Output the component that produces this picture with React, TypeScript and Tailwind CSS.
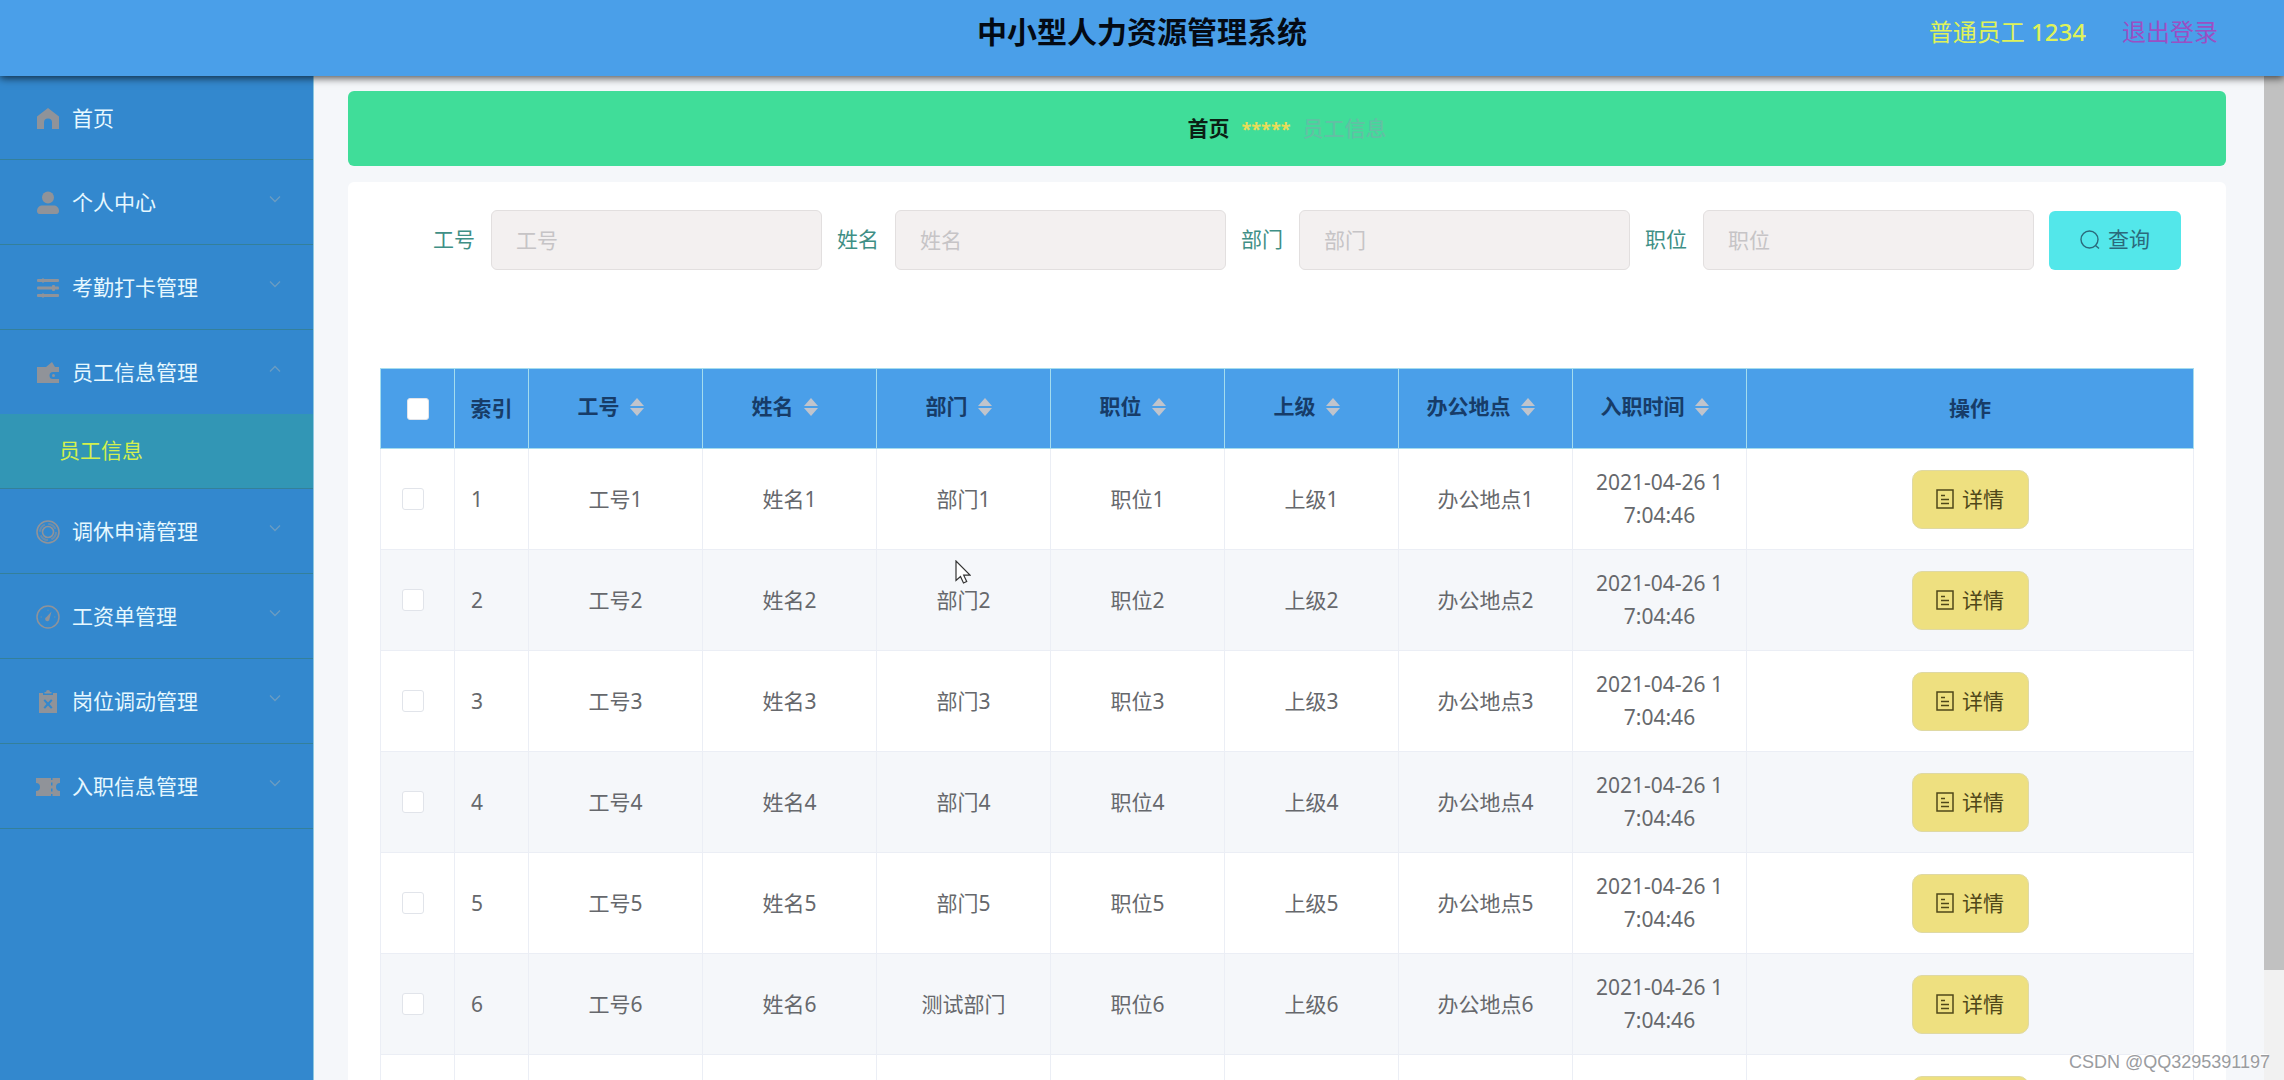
import { useState } from "react"
import type { ReactNode } from "react"

interface MenuItem {
  label: string
  icon: ReactNode
  children?: string[]
}

interface Employee {
  id: number
  jobNo: string
  name: string
  dept: string
  position: string
  leader: string
  office: string
  entryTime: string
}

const HomeIcon = () => (
  <svg viewBox="0 0 24 24" className="h-6 w-6" fill="currentColor" aria-hidden="true">
    <path d="M12 1 23 9.5V22h-7v-6.5a4 4 0 0 0-8 0V22H1V9.5z" />
  </svg>
)

const UserIcon = () => (
  <svg viewBox="0 0 24 24" className="h-6 w-6" fill="currentColor" aria-hidden="true">
    <circle cx="12" cy="6.5" r="6" />
    <path d="M1 20c0-3.500 2.500-5.500 5.500-5.500h11c3 0 5.500 2 5.500 5.500 0 1.500-.8 3-2.500 3h-17C1.800 23 1 21.500 1 20z" />
  </svg>
)

const OperationIcon = () => (
  <svg viewBox="0 0 24 24" className="h-6 w-6" fill="currentColor" aria-hidden="true">
    <rect x="1" y="3" width="22" height="3" rx="1" />
    <rect x="1" y="10.500" width="22" height="3" rx="1" />
    <rect x="1" y="18" width="22" height="3" rx="1" />
    <rect x="6" y="2.500" width="2" height="4" />
    <rect x="16" y="9" width="3" height="6" rx="1" />
    <rect x="6" y="17.500" width="2" height="4" />
  </svg>
)

const WalletIcon = () => (
  <svg viewBox="0 0 24 24" className="h-6 w-6" fill="currentColor" aria-hidden="true">
    <path d="M1 6h9l6-5 3 5h4v5h-6a3.500 3.500 0 0 0 0 7h6v4H1z" />
    <circle cx="17.500" cy="14.500" r="1.500" />
  </svg>
)

const HelpIcon = () => (
  <svg viewBox="0 0 24 24" className="h-6 w-6" fill="none" stroke="currentColor" aria-hidden="true">
    <circle cx="12" cy="12" r="11" strokeWidth="1.600" />
    <circle cx="12" cy="12" r="8" strokeWidth="2" strokeDasharray="9 3.566" strokeOpacity=".6" />
    <circle cx="12" cy="12" r="5.500" strokeWidth="1.600" />
  </svg>
)

const OdometerIcon = () => (
  <svg viewBox="0 0 24 24" className="h-6 w-6" fill="none" stroke="currentColor" aria-hidden="true">
    <circle cx="12" cy="12" r="11" strokeWidth="1.500" />
    <path d="M15.500 6.500 13.500 14a2.200 2.200 0 1 1-3-2z" fill="currentColor" stroke="none" />
    <path d="M4.500 12h1.500M18 12h1.500M12 4.500V6" strokeOpacity=".6" />
  </svg>
)

const ReleaseIcon = () => (
  <svg viewBox="0 0 24 24" className="h-6 w-6" fill="currentColor" fillRule="evenodd" aria-hidden="true">
    <path d="M3 3h4v2h10V3h4v20H3zM7.500 10.500 10.500 14l-3 3.500 1.500 1.200 3-3.200 3 3.200 1.500-1.200-3-3.500 3-3.500L15 9.300l-3 3.200-3-3.200z" />
    <path d="M8.500 3.500V2H10a2 2 0 0 1 4 0h1.500v1.500z" />
  </svg>
)

const TicketIcon = () => (
  <svg viewBox="0 0 24 24" className="h-6 w-6" fill="currentColor" aria-hidden="true">
    <path d="M0 3h15v2h1.500V3H24v5a4 4 0 0 0 0 8v5h-7.500v-2H15v2H0v-5a4 4 0 0 0 0-8zm15 4.500v3h1.500v-3zm0 6v3h1.500v-3z" fillRule="evenodd" />
  </svg>
)

const ChevronIcon = ({ up }: { up?: boolean }) => (
  <svg viewBox="0 0 12 8" className="h-2 w-3" fill="none" stroke="currentColor" strokeWidth="1.300" aria-hidden="true">
    <path d={up ? "M1 6.500 6 1.500l5 5" : "M1 1.500l5 5 5-5"} />
  </svg>
)

const SearchIcon = () => (
  <svg viewBox="0 0 20 20" className="h-5 w-5" fill="none" stroke="currentColor" strokeWidth="1.400" aria-hidden="true">
    <circle cx="9.500" cy="9.500" r="8.500" />
    <path d="m15.500 15.500 3.500 3" />
  </svg>
)

const DocumentIcon = () => (
  <svg viewBox="0 0 18 20" className="h-5 w-[18px]" fill="none" stroke="currentColor" strokeWidth="1.500" aria-hidden="true">
    <path d="M1 1h16v18H1zM5 6.500h4M5 10.500h8M5 14.500h8" />
  </svg>
)

const SortCaret = () => (
  <svg viewBox="0 0 14 18" className="h-[18px] w-[14px]" fill="#c0c4cc" aria-hidden="true">
    <path d="M7 0l7 8H0zM7 18l7-8H0z" />
  </svg>
)

const menu: MenuItem[] = [
  { label: "首页", icon: <HomeIcon /> },
  { label: "个人中心", icon: <UserIcon />, children: [] },
  { label: "考勤打卡管理", icon: <OperationIcon />, children: [] },
  { label: "员工信息管理", icon: <WalletIcon />, children: ["员工信息"] },
  { label: "调休申请管理", icon: <HelpIcon />, children: [] },
  { label: "工资单管理", icon: <OdometerIcon />, children: [] },
  { label: "岗位调动管理", icon: <ReleaseIcon />, children: [] },
  { label: "入职信息管理", icon: <TicketIcon />, children: [] },
]

const searchFields = [
  { key: "jobNo", label: "工号" },
  { key: "name", label: "姓名" },
  { key: "dept", label: "部门" },
  { key: "position", label: "职位" },
]

const sortColumns = ["工号", "姓名", "部门", "职位", "上级", "办公地点", "入职时间"]

const employees: Employee[] = [1, 2, 3, 4, 5, 6, 7].map((n) => ({
  id: n,
  jobNo: `工号${n}`,
  name: `姓名${n}`,
  dept: n === 6 ? "测试部门" : `部门${n}`,
  position: `职位${n}`,
  leader: `上级${n}`,
  office: `办公地点${n}`,
  entryTime: "2021-04-26 17:04:46",
}))

function Header() {
  return (
    <header className="relative z-10 grid h-[76px] shrink-0 grid-cols-[1fr_auto_1fr] items-center bg-[#4a9fe9] pb-3 shadow-[0_2px_8px_rgba(0,0,0,0.7)]">
      <h1 className="col-start-2 text-[30px] leading-9 font-bold text-[#040a14]">中小型人力资源管理系统</h1>
      <div className="flex justify-end gap-9 pr-[66px] text-2xl">
        <span className="text-[#dff25a]">
          普通员工 <span className="font-medium">1234</span>
        </span>
        <a href="#logout" className="text-[#9a4fc4]">
          退出登录
        </a>
      </div>
    </header>
  )
}

function Sidebar() {
  const [open, setOpen] = useState("员工信息管理")

  return (
    <nav className="w-[314px] shrink-0 border-r border-[#8cc8e0] bg-[#3388ce]">
      <ul>
        {menu.map((item) => {
          const isOpen = open === item.label
          if (!item.children) {
            return (
              <li key={item.label}>
                <a
                  href="#home"
                  className="flex h-[84px] items-center gap-3 border-b border-[#34809a] pt-0.5 pl-9 text-[21px] text-[#e6f8ff]"
                >
                  <span className="text-[#909399]">{item.icon}</span>
                  {item.label}
                </a>
              </li>
            )
          }
          return (
            <li key={item.label} className="border-b border-[#34809a]">
              <button
                type="button"
                aria-expanded={isOpen}
                onClick={() => setOpen(isOpen ? "" : item.label)}
                className="flex h-[84px] w-full items-center gap-3 pt-0.5 pr-8 pl-9 text-left text-[21px] text-[#e6f8ff]"
              >
                <span className="text-[#909399]">{item.icon}</span>
                <span className="flex-1">{item.label}</span>
                <span className="pb-2 text-[#6b9cc2]">
                  <ChevronIcon up={isOpen} />
                </span>
              </button>
              {isOpen &&
                item.children.map((child) => (
                  <a
                    key={child}
                    href="#employee"
                    className="flex h-[74px] items-center bg-[#3296b5] pl-[59px] text-[21px] text-[#d3f04e]"
                  >
                    {child}
                  </a>
                ))}
            </li>
          )
        })}
      </ul>
    </nav>
  )
}

function SearchForm() {
  return (
    <form className="flex items-center gap-[15px] pr-[45px] pl-[85px]" onSubmit={(e) => e.preventDefault()}>
      {searchFields.map((field) => (
        <div key={field.key} className="flex min-w-0 flex-1 items-center gap-4">
          <label htmlFor={field.key} className="shrink-0 text-[21px] text-[#3f8f86]">
            {field.label}
          </label>
          <input
            id={field.key}
            type="text"
            placeholder={field.label}
            className="h-[60px] w-full min-w-0 rounded-md border border-[#e2dfdf] bg-[#f3f0f0] px-6 text-[21px] text-[#606266] placeholder:text-[#c6c4c6]"
          />
        </div>
      ))}
      <button
        type="submit"
        className="flex h-[59px] w-[132px] shrink-0 items-center justify-center gap-2 rounded-md bg-[#53e7ea] text-[21px] text-[#2b6a7c]"
      >
        <SearchIcon />
        查询
      </button>
    </form>
  )
}

function EmployeeTable() {
  const [checked, setChecked] = useState<number[]>([])

  const toggle = (id: number) => {
    setChecked((prev) => (prev.includes(id) ? prev.filter((item) => item !== id) : [...prev, id]))
  }

  const toggleAll = () => {
    setChecked((prev) => (prev.length === employees.length ? [] : employees.map((item) => item.id)))
  }

  const th = "border border-[#a4dcee] bg-[#4a9fe9] p-0 font-bold"
  const td = "border border-[#ebeef5] px-4 py-0 break-all"
  const box =
    "block h-[22px] w-[22px] appearance-none rounded-[3px] border border-[#e1e4ea] bg-white checked:bg-[#409eff]"

  return (
    <table className="w-full table-fixed border-collapse text-center text-[21px] leading-[33px] text-[#66686c]">
      <colgroup>
        <col className="w-[74px]" />
        <col className="w-[74px]" />
        {sortColumns.map((column) => (
          <col key={column} className="w-[174px]" />
        ))}
        <col />
      </colgroup>
      <thead>
        <tr className="h-20 text-[#173c68]">
          <th className={th}>
            <input
              type="checkbox"
              aria-label="全选"
              checked={checked.length === employees.length}
              onChange={toggleAll}
              className={`${box} mx-auto`}
            />
          </th>
          <th className={th}>索引</th>
          {sortColumns.map((column) => (
            <th key={column} className={`${th} pb-1`}>
              <span className="flex items-center justify-center">
                {column}
                <span className="flex w-[34px] justify-center">
                  <SortCaret />
                </span>
              </span>
            </th>
          ))}
          <th className={th}>操作</th>
        </tr>
      </thead>
      <tbody>
        {employees.map((item) => (
          <tr key={item.id} className="h-[101px] even:bg-[#f5f7fa]">
            <td className="border border-[#ebeef5] py-0 pr-0 pl-[21px]">
              <input
                type="checkbox"
                aria-label={`选择${item.name}`}
                checked={checked.includes(item.id)}
                onChange={() => toggle(item.id)}
                className={box}
              />
            </td>
            <td className={`${td} text-left`}>{item.id}</td>
            <td className={td}>{item.jobNo}</td>
            <td className={td}>{item.name}</td>
            <td className={td}>{item.dept}</td>
            <td className={td}>{item.position}</td>
            <td className={td}>{item.leader}</td>
            <td className={td}>{item.office}</td>
            <td className={td}>{item.entryTime}</td>
            <td className={td}>
              <button
                type="button"
                className="mx-auto flex h-[59px] w-[117px] items-center justify-center gap-2 rounded-[10px] border border-[#dfd9a4] bg-[#eee080] text-[#4f4719]"
              >
                <DocumentIcon />
                详情
              </button>
            </td>
          </tr>
        ))}
      </tbody>
    </table>
  )
}

export default function App() {
  return (
    <div className="relative flex h-screen flex-col overflow-hidden bg-[#f5f7fa] font-['Noto_Sans','Noto_Sans_CJK_SC',sans-serif]">
      <Header />
      <div className="flex min-h-0 flex-1">
        <Sidebar />
        <main className="min-w-0 flex-1 overflow-hidden pt-[15px] pr-[38px] pl-[34px]">
          {/* Breadcrumb */}
          <div className="flex h-[75px] items-center justify-center gap-3 rounded-md bg-[#40dd99] text-[21px]">
            <a href="#home" className="font-bold text-[#0b1f14]">
              首页
            </a>
            <span className="text-lg font-bold text-[#e8dc58]">*****</span>
            <span className="font-medium text-[#62c0a4]">员工信息</span>
          </div>

          <section className="mt-4 rounded-md bg-white pt-7 pb-8">
            <SearchForm />
            <div className="mx-8 mt-[98px]">
              <EmployeeTable />
            </div>
          </section>
        </main>

        {/* Scrollbar */}
        <div className="w-5 shrink-0 bg-[#f1f1f1]">
          <div className="h-[89%] bg-[#c1c1c1]" />
        </div>
      </div>

      {/* Mouse pointer */}
      <svg viewBox="0 0 16 24" className="absolute top-[560px] left-[955px] h-6 w-4" fill="#fff" stroke="#333" strokeWidth="1.200" aria-hidden="true">
        <path d="M1 1v19.500l4.500-4 3 6.500 3.200-1.500-3-6.300H15z" />
      </svg>

      <span className="absolute right-3.5 bottom-1 font-['Liberation_Sans',sans-serif] text-lg text-[#9a9c9f] [text-shadow:-1px_-1px_0_#fff]">
        CSDN @QQ3295391197
      </span>
    </div>
  )
}
